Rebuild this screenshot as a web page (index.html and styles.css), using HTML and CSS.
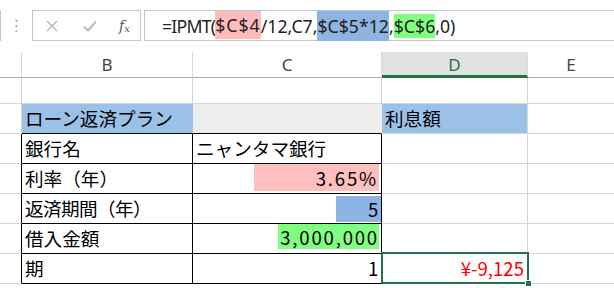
FILE: index.html
```html
<!DOCTYPE html>
<html><head><meta charset="UTF-8">
  <title>IPMT</title>
  <link rel="stylesheet" href="styles.css">
</head>
<body>
  <div class="fbar">
    <div class="namebox"></div>
    <div class="grip">&#8942;</div>
    <div class="btns">
      <svg class="ic" width="12" height="12" viewBox="0 0 12 12"><path d="M1 1L11 11M11 1L1 11" stroke="#b4b4b4" stroke-width="1.4" fill="none"/></svg>
      <svg class="ic" width="14" height="12" viewBox="0 0 14 12"><path d="M1 6.5L5 10.5L13 1.5" stroke="#bdbdbd" stroke-width="2" fill="none"/></svg>
      <span class="fx">f<sub>x</sub></span>
    </div>
    <div class="formula">
      <span class="fn">=IPMT(</span><span class="hl pink">$C$4</span><span>/12,C7,</span><span class="hl blue">$C$5*12</span><span>,</span><span class="hl green">$C$6</span><span>,0)</span>
    </div>
  </div>

  <div class="sheet">
    <div class="row hdr">
      <div class="c a"></div>
      <div class="c b">B</div>
      <div class="c cc">C</div>
      <div class="c d cur">D</div>
      <div class="c e">E</div>
    </div>
    <div class="row r1">
      <div class="c a"></div><div class="c b"></div><div class="c cc"></div><div class="c d"></div><div class="c e"></div>
    </div>
    <div class="row">
      <div class="c a"></div>
      <div class="c b title">ローン返済プラン</div>
      <div class="c cc grey"></div>
      <div class="c d title">利息額</div>
      <div class="c e"></div>
    </div>
    <div class="row tb">
      <div class="c a"></div>
      <div class="c b">銀行名</div>
      <div class="c cc">ニャンタマ銀行</div>
      <div class="c d"></div><div class="c e"></div>
    </div>
    <div class="row tb">
      <div class="c a"></div>
      <div class="c b">利率（年）</div>
      <div class="c cc num"><span class="mark mpink">3.65%</span></div>
      <div class="c d"></div><div class="c e"></div>
    </div>
    <div class="row tb">
      <div class="c a"></div>
      <div class="c b paren">返済期間（年）</div>
      <div class="c cc num"><span class="mark mblue">5</span></div>
      <div class="c d"></div><div class="c e"></div>
    </div>
    <div class="row tb">
      <div class="c a"></div>
      <div class="c b">借入金額</div>
      <div class="c cc num"><span class="mark mgreen">3,000,000</span></div>
      <div class="c d"></div><div class="c e"></div>
    </div>
    <div class="row tb">
      <div class="c a"></div>
      <div class="c b">期</div>
      <div class="c cc num">1</div>
      <div class="c d num red selcell">¥-9,125</div>
      <div class="c e"></div>
    </div>
  </div>
</body></html>
```

FILE: styles.css
```css
html, body {
  margin: 0;
  background: #fff;
  overflow: hidden;
}

body {
  height: 288px;
  font-family: "Noto Sans CJK JP", sans-serif;
  color: #000;
}

/* formula bar */
.fbar {
  display: flex;
  height: 52px;
  padding-top: 10px;
  box-sizing: border-box;
}

.namebox {
  width: 0;
  height: 31px;
  border-right: 1px solid #c6c6c6;
}

.grip {
  width: 31px;
  text-align: center;
  color: #a8a8a8;
  font-size: 16px;
  line-height: 31px;
  font-family: "DejaVu Sans", sans-serif;
}

.btns {
  width: 109px;
  height: 31px;
  box-sizing: border-box;
  border: 1px solid #c6c6c6;
  display: flex;
  align-items: center;
  padding-left: 13px;
}

.btns .ic {
  margin-right: 25px;
}

.btns .ic + .ic {
  margin-right: 22px;
}

.fx {
  font-family: "DejaVu Serif", serif;
  font-style: italic;
  font-size: 14px;
  color: #555;
}

.fx sub {
  font-size: 10px;
  vertical-align: -1px;
}

.formula {
  flex: 1;
  margin-left: 3px;
  height: 31px;
  box-sizing: border-box;
  border: 1px solid #c6c6c6;
  border-right: 0;
  display: flex;
  align-items: center;
  padding-left: 17px;
  font-family: "Noto Sans", sans-serif;
  font-size: 17.7px;
  color: #222;
  white-space: pre;
}

.fn { letter-spacing: -0.8px; }

.hl {
  display: flex;
  align-items: center;
}

.pink { background: #ffbcbc; height: 28px; margin-top: -2px; letter-spacing: 1px; }
.blue { background: #8eb4e3; height: 30px; }
.green { background: #80ff80; height: 24px; }

/* sheet */
.row {
  display: flex;
  height: 30px;
}

.c {
  box-sizing: border-box;
  height: 100%;
  border-right: 1px solid #d4d4d4;
  border-bottom: 1px solid #d4d4d4;
  display: flex;
  align-items: flex-end;
  padding: 0 3px 3px 3px;
  font-size: 18.6px;
  line-height: 24px;
  white-space: nowrap;
}

.a { width: 22px; }
.b { width: 171px; }
.cc { width: 189px; }
.d { width: 146px; }
.e { flex: 1; border-right: 0; }

.paren { letter-spacing: -0.6px; }

.hdr {
  height: 26px;
}

.hdr .c {
  justify-content: center;
  align-items: center;
  padding: 0;
  font-family: "Noto Sans", sans-serif;
  font-size: 17px;
  color: #444;
  border-bottom-color: #ababab;
  border-right-color: #dadada;
}

.hdr .cur {
  background: #e1e1e1;
  color: #217346;
  border-bottom: 3px solid #217346;
  padding-top: 2px;
}

.r1 { height: 26px; }

.title {
  background: #9bc2e6;
  border-right-color: #9bc2e6;
  border-bottom-color: #9bc2e6;
}

.row .b.title { border-bottom-color: #000; }

.grey {
  background: #ededed;
  border-right-color: #ededed;
  border-bottom-color: #000;
}

.d.title { border-right-color: #d4d4d4; border-bottom-color: #d4d4d4; }

.tb .a, .tb .b, .tb .cc { border-right-color: #000; }
.tb .b, .tb .cc { border-bottom-color: #000; }

.num {
  justify-content: flex-end;
}

.cc.num {
  letter-spacing: 1.8px;
  padding-right: 1px;
}

.mark {
  display: flex;
  justify-content: flex-end;
  align-items: center;
}

.mpink { background: #ffbfbf; width: 125px; height: 27px; margin-bottom: -1px; padding-right: 1px; margin-right: 1px; box-sizing: border-box; }
.mblue { background: #8db4e2; width: 45px; height: 26px; margin-right: -1px; padding-right: 1px; box-sizing: border-box; margin-bottom: -2px; }
.mgreen { background: #80ff80; width: 101px; height: 25px; margin-bottom: 1px; margin-right: 1px; }

.red { color: #ff0000; }

.selcell {
  position: relative;
}

.selcell::after {
  content: "";
  position: absolute;
  left: -1px;
  top: -2px;
  right: -2px;
  bottom: -1px;
  border: 2px solid #217346;
}

.selcell::before {
  content: "";
  position: absolute;
  right: -5px;
  bottom: -4px;
  width: 5px;
  height: 5px;
  background: #217346;
  border: 1px solid #fff;
  z-index: 1;
}
```
